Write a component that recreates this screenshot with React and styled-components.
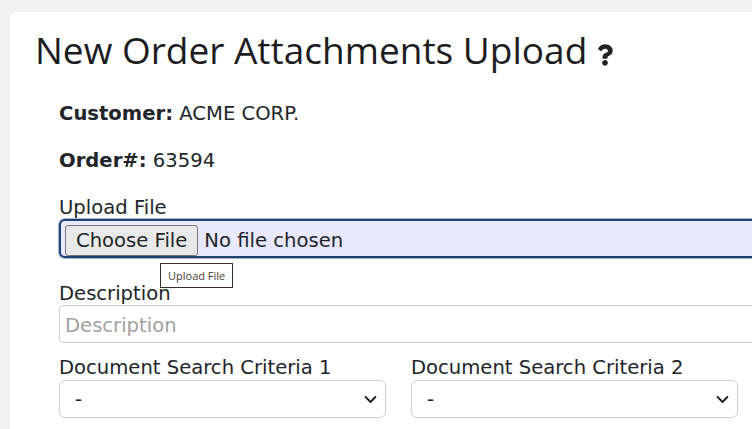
import React from 'react';
import styled, { createGlobalStyle } from 'styled-components';
import { FaQuestion } from 'react-icons/fa';

const GlobalStyle = createGlobalStyle`
  html, body {
    margin: 0;
    padding: 0;
    background: #f2f2f2;
    overflow: hidden;
  }
`;

const Page = styled.div`
  width: 752px;
  height: 429px;
  overflow: hidden;
  padding: 12px 0 0 10px;
  box-sizing: border-box;
  font-family: "DejaVu Sans", Verdana, sans-serif;
  color: #212529;
`;

const Card = styled.div`
  width: 1100px;
  min-height: 500px;
  background: #ffffff;
  border-radius: 7px;
  padding: 14px 24px 0 25px;
  box-sizing: border-box;
`;

const Title = styled.h1`
  margin: 0;
  display: flex;
  align-items: center;
  gap: 10px;
  font-family: "Open Sans", "Noto Sans", sans-serif;
  font-weight: 400;
  font-size: 37px;
  line-height: 48px;
  color: #1d1d1f;

  svg {
    width: 16px;
    height: 24px;
    margin-top: 10px;
    color: #222;
  }
`;

const Form = styled.div`
  padding: 28px 0 0 24px;
  font-size: 19.6px;
  line-height: 23px;
`;

const InfoLine = styled.p`
  margin: 0 0 24px;

  b {
    font-weight: 700;
  }
`;

const Field = styled.div`
  position: relative;
  margin-bottom: ${(p) => p.$gap || 0}px;
`;

const Label = styled.label`
  display: block;
  font-size: 19.6px;
  line-height: 23px;
  margin-bottom: ${(p) => p.$space || 0}px;
`;

const FileInput = styled.input`
  display: block;
  width: 1000px;
  height: 39px;
  box-sizing: border-box;
  margin: 0;
  padding: 4px 3px;
  border: 2px solid #1d4374;
  box-shadow: 0 0 0 1px #a9b8cf;
  border-radius: 6px 0 0 6px;
  background: #e8e8ff;
  font-family: "DejaVu Sans", Verdana, sans-serif;
  font-size: 19.6px;
  color: #212529;

  &::file-selector-button {
    height: 31px;
    margin: 0 6px 0 1px;
    padding: 0 10px;
    border: 1px solid #767676;
    border-radius: 3px;
    background: #e9e9e9;
    font-family: "DejaVu Sans", Verdana, sans-serif;
    font-size: 19.6px;
    color: #212529;
  }
`;

const Tooltip = styled.div`
  position: absolute;
  left: 101px;
  top: 67px;
  padding: 5px 7px;
  background: #fff;
  border: 1px solid #3e2b27;
  font-family: "Open Sans", "Noto Sans", sans-serif;
  font-size: 11px;
  line-height: 13px;
  color: #4a3a34;
  white-space: nowrap;
  z-index: 2;
`;

const TextInput = styled.input`
  display: block;
  width: 1000px;
  height: 38px;
  box-sizing: border-box;
  margin: 0;
  padding: 2px 5px 0;
  border: 1px solid #cfcfcf;
  border-radius: 4px;
  font-family: "DejaVu Sans", Verdana, sans-serif;
  font-size: 19.6px;
  color: #212529;

  &::placeholder {
    color: #a2a2a2;
  }
`;

const Row = styled.div`
  display: grid;
  grid-template-columns: 327px 327px;
  gap: 25px;
`;

const Select = styled.select`
  display: block;
  width: 100%;
  height: 38px;
  box-sizing: border-box;
  margin: 0;
  padding: 0 40px 0 15px;
  appearance: none;
  border: 1px solid #cfcfcf;
  border-radius: 6px;
  background-color: #fff;
  background-image: url("data:image/svg+xml,%3csvg xmlns='http://www.w3.org/2000/svg' viewBox='0 0 16 16'%3e%3cpath fill='none' stroke='%23222' stroke-linecap='round' stroke-linejoin='round' stroke-width='2.4' d='m2 5 6 6 6-6'/%3e%3c/svg%3e");
  background-repeat: no-repeat;
  background-position: right 7px center;
  background-size: 15px 13px;
  font-family: "DejaVu Sans", Verdana, sans-serif;
  font-size: 19.6px;
  color: #212529;
`;

export default function App() {
  return (
    <>
      <GlobalStyle />
      <Page>
        <Card>
          <Title>
            New Order Attachments Upload
            <FaQuestion />
          </Title>
          <Form>
            <InfoLine>
              <b>Customer:</b> ACME CORP.
            </InfoLine>
            <InfoLine>
              <b>Order#:</b> 63594
            </InfoLine>
            <Field $gap={24}>
              <Label htmlFor="upload">Upload File</Label>
              <FileInput id="upload" type="file" title="Upload File" />
              <Tooltip>Upload File</Tooltip>
            </Field>
            <Field $gap={13}>
              <Label htmlFor="desc">Description</Label>
              <TextInput id="desc" type="text" placeholder="Description" />
            </Field>
            <Row>
              <Field>
                <Label htmlFor="crit1" $space={1}>Document Search Criteria 1</Label>
                <Select id="crit1" defaultValue="-">
                  <option>-</option>
                </Select>
              </Field>
              <Field>
                <Label htmlFor="crit2" $space={1}>Document Search Criteria 2</Label>
                <Select id="crit2" defaultValue="-">
                  <option>-</option>
                </Select>
              </Field>
            </Row>
          </Form>
        </Card>
      </Page>
    </>
  );
}
